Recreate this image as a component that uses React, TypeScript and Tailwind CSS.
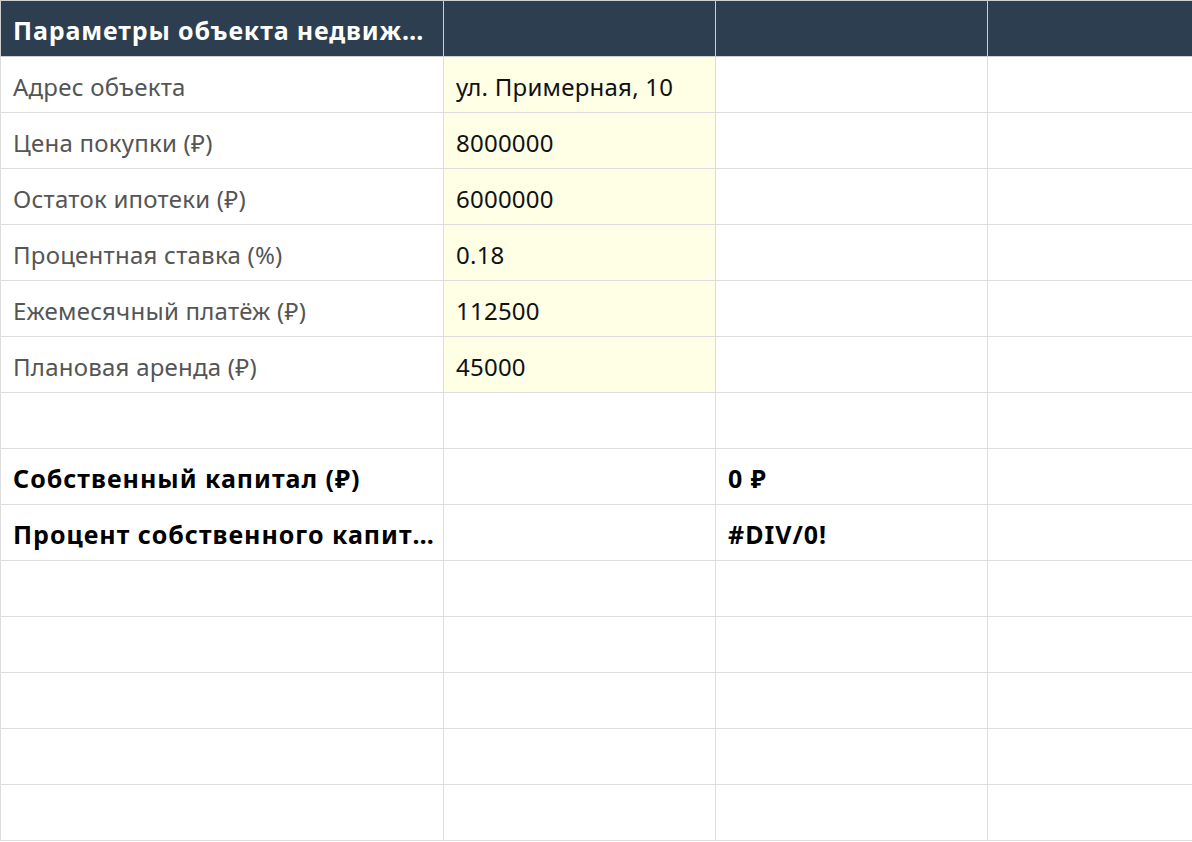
import React from 'react';

type Cell = { text?: string; bold?: boolean; input?: boolean; muted?: boolean };

const FONT = "font-['Segoe_UI','Noto_Sans',sans-serif]";

const inputs: [string, string][] = [
  ['Адрес объекта', 'ул. Примерная, 10'],
  ['Цена покупки (₽)', '8000000'],
  ['Остаток ипотеки (₽)', '6000000'],
  ['Процентная ставка (%)', '0.18'],
  ['Ежемесячный платёж (₽)', '112500'],
  ['Плановая аренда (₽)', '45000'],
];

const rows: Cell[][] = [
  ...inputs.map(([label, value]) => [
    { text: label, muted: true },
    { text: value, input: true },
    {},
    {},
  ]),
  [{}, {}, {}, {}],
  [{ text: 'Собственный капитал (₽)', bold: true }, {}, { text: '0 ₽', bold: true }, {}],
  [{ text: 'Процент собственного капитала', bold: true }, {}, { text: '#DIV/0!', bold: true }, {}],
  ...Array.from({ length: 5 }, () => [{}, {}, {}, {}]),
];

const widths = ['w-[443px]', 'w-[272px]', 'w-[272px]', 'w-[272px]'];

export default function App() {
  return (
    <div className={`w-[1192px] h-[842px] overflow-hidden bg-white ${FONT}`}>
      <table className="border-collapse table-fixed w-[1259px]">
        <colgroup>
          {widths.map((w, i) => (
            <col key={i} className={w} />
          ))}
        </colgroup>
        <thead>
          <tr className="h-[56px] bg-[#2c3e50]">
            <th
              title="Параметры объекта недвижимости"
              className="border border-[#cfcfcf] pl-3 pr-2 pt-1 text-left text-[25px] font-bold tracking-[0.035em] text-white truncate"
            >
              Параметры объекта недвижимости
            </th>
            <th className="border border-[#cfcfcf]" />
            <th className="border border-[#cfcfcf]" />
            <th className="border border-[#cfcfcf]" />
          </tr>
        </thead>
        <tbody>
          {rows.map((row, r) => (
            <tr key={r} className="h-[56px]">
              {row.map((c, i) => (
                <td
                  key={i}
                  title={c.text}
                  className={`border border-[#dddddd] pl-3 pr-2 pt-1 truncate ${
                    c.input ? 'bg-[#ffffe6]' : ''
                  } ${
                    c.bold
                      ? 'text-[25px] font-bold tracking-[0.04em] text-black'
                      : c.muted
                        ? 'text-[24px] tracking-[0.01em] text-[#555]'
                        : 'text-[24px] tracking-[0.01em] text-[#111]'
                  }`}
                >
                  {c.text}
                </td>
              ))}
            </tr>
          ))}
        </tbody>
      </table>
    </div>
  );
}
